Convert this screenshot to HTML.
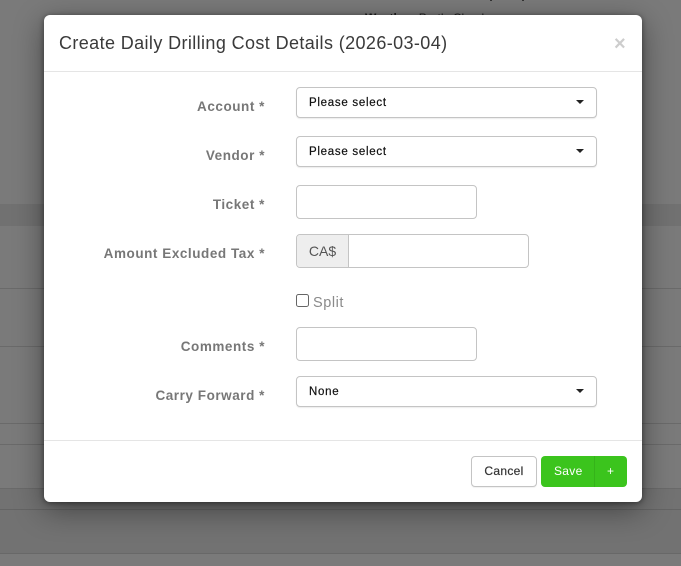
<!DOCTYPE html>
<html>
<head>
<meta charset="utf-8">
<style>
html,body{margin:0;padding:0;}
body{width:681px;height:566px;overflow:hidden;position:relative;background:#7a7a7a;font-family:"Liberation Sans",sans-serif;}
.a{position:absolute;white-space:nowrap;}
.band{position:absolute;left:0;width:681px;}
.line{position:absolute;left:0;width:681px;height:1px;background:#6a6a6a;}
#modal{position:absolute;left:44px;top:15px;width:598px;height:487px;background:#fff;border-radius:6px;box-shadow:0 8px 30px rgba(0,0,0,.42),0 1px 6px rgba(0,0,0,.45);}
.lbl{position:absolute;left:0;width:221px;text-align:right;font-weight:bold;font-size:13.5px;color:#777;line-height:18px;letter-spacing:.55px;white-space:nowrap;}
.box{position:absolute;box-sizing:border-box;background:#fff;border:1px solid #c4c4c4;border-radius:4px;}
.sel{left:252px;width:301px;height:31px;box-shadow:0 1px 1px rgba(0,0,0,.08);}
.sel span{position:absolute;left:12px;top:8px;font-size:11.5px;line-height:15px;color:#111;letter-spacing:.72px;-webkit-text-stroke:.2px #111;}
.sel i{position:absolute;right:12px;top:12px;width:0;height:0;border-left:4px solid transparent;border-right:4px solid transparent;border-top:4px solid #222;}
.inp{left:252px;width:181px;height:34px;}
</style>
</head>
<body>
<div class="band" style="top:204px;height:22px;background:#717171"></div>
<div class="line" style="top:288px"></div>
<div class="line" style="top:346px"></div>
<div class="line" style="top:423px"></div>
<div class="line" style="top:444px"></div>
<div class="band" style="top:488px;height:65px;background:#727272"></div>
<div class="line" style="top:488px;background:#6a6a6a"></div>
<div class="line" style="top:509px;background:#646464"></div>
<div class="line" style="top:553px;background:#686868"></div>
<div class="a" style="left:365px;top:11px;font-size:12px;line-height:14px;color:#1c1c1c"><b>Weather</b>&nbsp; Partly Cloudy</div>
<div class="a" style="left:490px;top:0;width:2px;height:1px;background:#333"></div>
<div class="a" style="left:522px;top:0;width:2px;height:1px;background:#333"></div>

<div id="modal">
  <div class="a" style="left:15px;top:17px;font-size:18px;line-height:22px;color:#3a3a3a;letter-spacing:.39px">Create Daily Drilling Cost Details (2026-03-04)</div>
  <div class="a" style="left:570px;top:19px;font-size:20px;line-height:20px;font-weight:bold;color:#cdcdcd">×</div>
  <div style="position:absolute;left:0;top:56px;width:598px;height:1px;background:#e5e5e5"></div>

  <div class="lbl" style="top:83px">Account *</div>
  <div class="box sel" style="top:72px"><span>Please select</span><i></i></div>

  <div class="lbl" style="top:132px">Vendor *</div>
  <div class="box sel" style="top:121px"><span>Please select</span><i></i></div>

  <div class="lbl" style="top:181px">Ticket *</div>
  <div class="box inp" style="top:170px"></div>

  <div class="lbl" style="top:230px">Amount Excluded Tax *</div>
  <div class="box" style="left:252px;top:219px;width:233px;height:34px;overflow:hidden">
    <div style="position:absolute;left:0;top:0;width:51px;height:32px;background:#eee;border-right:1px solid #c4c4c4;font-size:14px;line-height:32px;text-align:center;color:#555">CA$</div>
  </div>

  <div class="box" style="left:252px;top:279px;width:13px;height:13px;border:1px solid #666;border-radius:2.5px"></div>
  <div class="a" style="left:269px;top:280px;font-size:14.5px;line-height:17px;color:#8a8a8a;letter-spacing:.55px">Split</div>

  <div class="lbl" style="top:323px">Comments *</div>
  <div class="box inp" style="top:312px"></div>

  <div class="lbl" style="top:372px">Carry Forward *</div>
  <div class="box sel" style="top:361px"><span>None</span><i></i></div>

  <div style="position:absolute;left:0;top:425px;width:598px;height:1px;background:#e5e5e5"></div>

  <div class="box" style="left:427px;top:441px;width:66px;height:31px;text-align:center;font-size:12px;line-height:29px;color:#333;letter-spacing:.3px;-webkit-text-stroke:.2px #333;box-shadow:0 1px 1px rgba(0,0,0,.06)">Cancel</div>
  <div style="position:absolute;left:497px;top:441px;width:86px;height:31px;background:#3bc41d;border-radius:4px;color:#fff;font-size:12px;line-height:31px">
    <span style="position:absolute;left:13px;letter-spacing:.3px">Save</span>
    <span style="position:absolute;left:53px;top:0;width:1px;height:31px;background:#35b31a"></span>
    <span style="position:absolute;left:66px;">+</span>
  </div>
</div>
</body>
</html>
